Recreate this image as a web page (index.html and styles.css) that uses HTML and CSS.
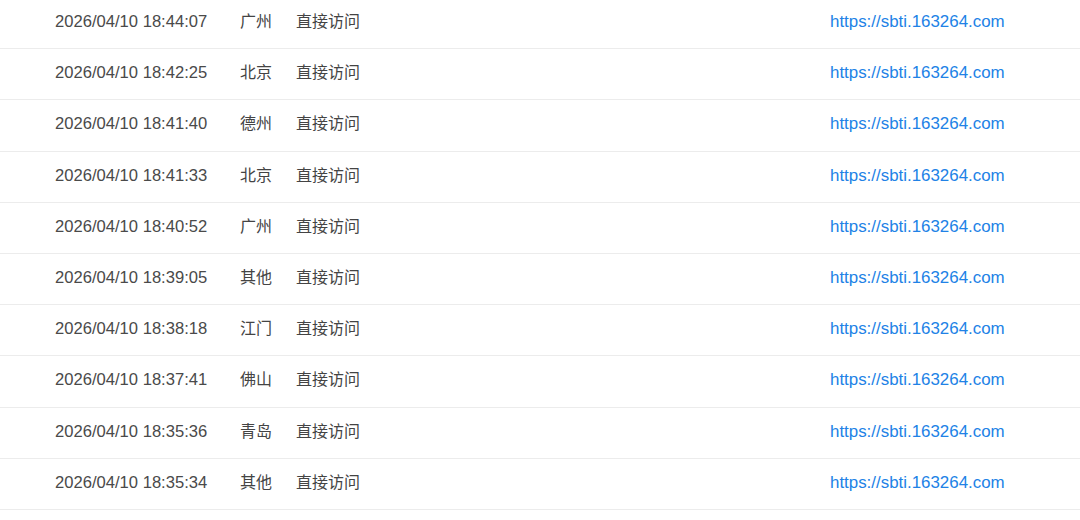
FILE: index.html
```html
<!DOCTYPE html>
<html lang="zh-CN">
<head>
    <meta charset="UTF-8">
    <meta name="viewport" content="width=device-width, initial-scale=1.0">
    <title>访问记录</title>
    <link rel="stylesheet" href="styles.css">
</head>
<body>

    <div class="log">
        <div class="row">
            <span class="time">2026/04/10 18:44:07</span>
            <span class="city">广州</span>
            <span class="source">直接访问</span>
            <a class="url" href="#">https://sbti.163264.com</a>
        </div>
        <div class="row">
            <span class="time">2026/04/10 18:42:25</span>
            <span class="city">北京</span>
            <span class="source">直接访问</span>
            <a class="url" href="#">https://sbti.163264.com</a>
        </div>
        <div class="row">
            <span class="time">2026/04/10 18:41:40</span>
            <span class="city">德州</span>
            <span class="source">直接访问</span>
            <a class="url" href="#">https://sbti.163264.com</a>
        </div>
        <div class="row">
            <span class="time">2026/04/10 18:41:33</span>
            <span class="city">北京</span>
            <span class="source">直接访问</span>
            <a class="url" href="#">https://sbti.163264.com</a>
        </div>
        <div class="row">
            <span class="time">2026/04/10 18:40:52</span>
            <span class="city">广州</span>
            <span class="source">直接访问</span>
            <a class="url" href="#">https://sbti.163264.com</a>
        </div>
        <div class="row">
            <span class="time">2026/04/10 18:39:05</span>
            <span class="city">其他</span>
            <span class="source">直接访问</span>
            <a class="url" href="#">https://sbti.163264.com</a>
        </div>
        <div class="row">
            <span class="time">2026/04/10 18:38:18</span>
            <span class="city">江门</span>
            <span class="source">直接访问</span>
            <a class="url" href="#">https://sbti.163264.com</a>
        </div>
        <div class="row">
            <span class="time">2026/04/10 18:37:41</span>
            <span class="city">佛山</span>
            <span class="source">直接访问</span>
            <a class="url" href="#">https://sbti.163264.com</a>
        </div>
        <div class="row">
            <span class="time">2026/04/10 18:35:36</span>
            <span class="city">青岛</span>
            <span class="source">直接访问</span>
            <a class="url" href="#">https://sbti.163264.com</a>
        </div>
        <div class="row">
            <span class="time">2026/04/10 18:35:34</span>
            <span class="city">其他</span>
            <span class="source">直接访问</span>
            <a class="url" href="#">https://sbti.163264.com</a>
        </div>
    </div>

</body>
</html>
```

FILE: styles.css
```css
body {
    margin: 0;
    background: #fff;
    font-family: "Liberation Sans", Arial, "Noto Sans CJK SC", sans-serif;
    font-size: 16.6px;
    color: #444;
}

.log {
    margin-top: -2px;
}

.row {
    display: grid;
    grid-template-columns: 185px 56px 1fr 250px;
    align-items: center;
    height: 51.2px;
    box-sizing: border-box;
    padding: 0 0 2px 55px;
    line-height: 20px;
    border-bottom: 1px solid #ececec;
}

.time {
    color: #4a4a4a;
}

.city, .source {
    font-size: 16px;
    color: #444;
}

.url {
    font-size: 16.9px;
    color: #2182e6;
    text-decoration: none;
}
```
